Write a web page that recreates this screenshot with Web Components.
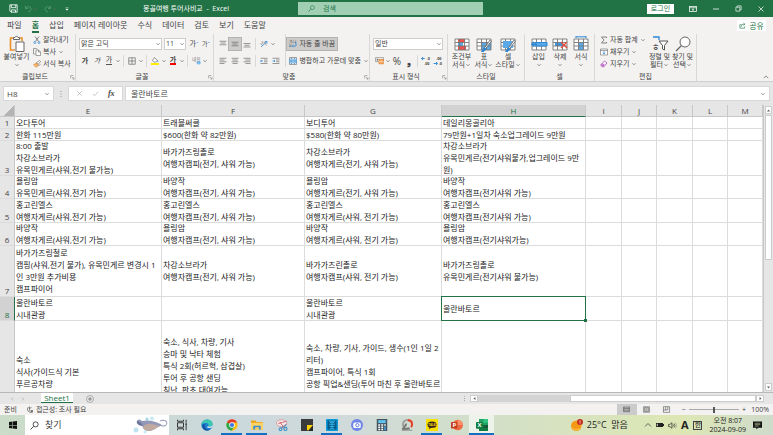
<!DOCTYPE html>
<html lang="ko">
<head>
<meta charset="utf-8">
<title>몽골여행 투어사비교 - Excel</title>
<style>
:root {
    --green: #217346;
    --ribbon: #f3f2f1;
    --frame: #e6e6e6;
    --line: #d8d8d8;
    --ink: #444;
    --font: "Open Sans", "Noto Sans CJK KR", sans-serif;
}
body {
    margin: 0;
    font-family: var(--font);
    font-size: 7px;
    line-height: 10px;
    color: var(--ink);
}
</style>
</head>
<body>
<excel-app></excel-app>

<script>
const base = `
* { box-sizing: border-box; }
button, input, select { font: inherit; color: inherit; margin: 0; padding: 0; border: 0; background: none; outline: 0; border-radius: 0; min-width: 0; }
button { display: flex; align-items: center; justify-content: center; white-space: nowrap; }
a { color: inherit; text-decoration: none; }
`;

function define(name, html, setup) {
    const template = document.createElement('template');
    template.innerHTML = html.replace('<style>', '<style>' + base);
    customElements.define(name, class extends HTMLElement {
        constructor() {
            super();
            this.attachShadow({ mode: 'open' });
            this.shadowRoot.appendChild(template.content.cloneNode(true));
        }
        connectedCallback() {
            if (setup) setup(this, this.shadowRoot);
        }
    });
}

// table body shared by the style and cell icons
const gridIcon = (fill) => `<rect x="1" y="3" width="14" height="11" fill="#fff"/>${fill}<path d="M1 3h14v11H1zM1 6.500h14M1 10h14M5.500 3v11M10.500 3v11" stroke="#777" stroke-width=".9"/>`;
const alignIcon = (w) => w.map((n, i) => `<path d="M${n[0]} ${2.5 + i * 3.5}H${n[1]}" stroke="#666" stroke-width="1.300"/>`).join('');

const icons = {
    caret: '<path d="M4 6l4 4 4-4" stroke="#666" stroke-width="2"/>',
    up: '<path d="M2 11l6-6 6 6" stroke="#444" stroke-width="1.600"/>',
    save: '<path d="M1.500 1.500h13v13H3.500l-2-2zM4 1.500v5h8v-5M4.500 14.500v-4h7v4" stroke="#fff" stroke-width="1.500"/>',
    undo: '<path d="M3 2v5h5M3 7c3-5 11-5 11 1 0 3-3 5-6 6" stroke="#5b9a78" stroke-width="1.600"/>',
    redo: '<path d="M13 2v5H8M13 7C10 2 2 2 2 8c0 3 3 5 6 6" stroke="#5b9a78" stroke-width="1.600"/>',
    custom: '<path d="M4 5h8" stroke="#fff" stroke-width="1.500"/><path d="M4 8h8l-4 4z" fill="#fff"/>',
    search: '<circle cx="10" cy="6" r="4.500" stroke="currentColor" stroke-width="1.400"/><path d="M6.500 9.500L1 15" stroke="currentColor" stroke-width="1.500"/>',
    display: '<rect x="1" y="3" width="14" height="10" stroke="#fff" stroke-width="1.500"/><path d="M1 5.500h14M8 12V8M6 9.500l2-2 2 2" stroke="#fff" stroke-width="1.500"/>',
    min: '<path d="M2 8h12" stroke="#fff" stroke-width="1.500"/>',
    restore: '<path d="M2 5h9v9H2zM5 5V2h9v9h-3" stroke="#fff" stroke-width="1.500"/>',
    close: '<path d="M3 3l10 10M13 3L3 13" stroke="#fff" stroke-width="1.400"/>',
    share: '<path d="M6 6H2v8h11v-4M5 11c0-5 3-6 8-6M10 2l3.500 3L10 8" stroke="#217346" stroke-width="1.400"/>',
    paste: '<path d="M5 2H1.500v12H6M10 2h3v3" stroke="#e8912d" stroke-width="1.600"/><path d="M4.500 3.500v-2h1.500c0-1.500 3-1.500 3 0h1.500v2z" fill="#fff" stroke="#666"/><path d="M7 6h8v9.500H7z" fill="#fff" stroke="#666"/>',
    cut: '<path d="M4 1l7 10M12 1L5 11" stroke="#555" stroke-width="1.400"/><circle cx="3.500" cy="13" r="2" stroke="#2b88d8" stroke-width="1.500"/><circle cx="12" cy="13" r="2" stroke="#2b88d8" stroke-width="1.500"/>',
    copy: '<path d="M5 12H1V1h6l2 2" stroke="#666" stroke-width="1.200"/><path d="M6 4h5l4 4v7H6zM11 4v4h4" fill="#fff" stroke="#666" stroke-width="1.200"/>',
    brush: '<path d="M1 9l6-3 4 5-5 4z" fill="#f7b46c" stroke="#e07c1c"/><path d="M7 5l5 6 2-2-2-2 3-4-2-2-4 3z" fill="#fff" stroke="#555" stroke-width="1.200"/>',
    launcher: '<path d="M2 11V2h9M6 6l7 7M13 8v5H8" stroke="#666" stroke-width="1.500"/>',
    borders: '<path d="M1.500 1.500h13v13h-13zM8 1.500v13M1.500 8h13" stroke="#555" stroke-width="1.200"/>',
    fill: '<path d="M7 1l6 6-5 4-5-4z" fill="#fff" stroke="#555" stroke-width="1.200"/><path d="M13 6c2 2 2 4 1 4s-2-1-1-4" fill="#2b88d8"/><path d="M0 12h16v4H0z" fill="#ffeb00"/>',
    phonetic: '<text x="0" y="8" font-size="8" fill="#777">내천</text><path d="M10 10h4v4h-4zM8 12h7" stroke="#5aa9e6" stroke-width="1.500"/>',
    top: '<path d="M1 2.500h14M3 6h10M1 9.500h14" stroke="#666" stroke-width="1.300"/>',
    middle: '<path d="M1 4.500h14M3 8h10M1 11.500h14" stroke="#666" stroke-width="1.300"/>',
    bottom: '<path d="M1 7h14M3 10.500h10M1 14h14" stroke="#666" stroke-width="1.300"/>',
    left: alignIcon([[1, 15], [1, 11], [1, 15], [1, 11]]),
    center: alignIcon([[1, 15], [3, 13], [1, 15], [3, 13]]),
    right: alignIcon([[1, 15], [5, 15], [1, 15], [5, 15]]),
    orient: '<path d="M2 14L14 3M10 3h4v4" stroke="#2b88d8" stroke-width="1.600"/><path d="M1 6l4 5M3 4c3-1 4 2 2 4M8 3l5 8" stroke="#666" stroke-width="1.200"/>',
    outdent: '<path d="M1 2.500h14M8 6h7M8 9.500h7M1 13h14" stroke="#666" stroke-width="1.300"/><path d="M6 8H1M3 6L1 8l2 2" stroke="#2b88d8" stroke-width="1.500"/>',
    indent: '<path d="M1 2.500h14M8 6h7M8 9.500h7M1 13h14" stroke="#666" stroke-width="1.300"/><path d="M1 8h5M4 6l2 2-2 2" stroke="#2b88d8" stroke-width="1.500"/>',
    wrap: '<text x="0" y="7" font-size="8" fill="#555">가나</text><path d="M1 12h4M12 5h2v7H7M9 9.500L6.500 12 9 14.500" stroke="#2b88d8" stroke-width="1.500"/><path d="M0 10h5M0 13h5" stroke="#666"/>',
    merge: '<path d="M1 1h14v14H1z" fill="#fff" stroke="#555"/><path d="M1 4h14v8H1z" fill="#b9dcf5" stroke="#2b88d8"/><path d="M5 1v3M11 1v3M5 12v3M11 12v3" stroke="#555"/><path d="M3 8h10M5 6L3 8l2 2M11 6l2 2-2 2" stroke="#1f78c8" stroke-width="1.200"/>',
    money: '<path d="M1 3h14v7H1z" fill="#fff" stroke="#666"/><path d="M3 5h3v3H3z" fill="#666"/><path d="M7 6h8v8H7z" fill="#f4a25a" stroke="#e07c1c"/><path d="M7 10h8" stroke="#fff"/>',
    decInc: '<path d="M6 4H1M3 1.500L1 4l2 2.500" stroke="#2b88d8" stroke-width="1.500"/><text x="9" y="6" font-size="6" font-weight="bold" fill="#444">.0</text><text x="5" y="15" font-size="6" font-weight="bold" fill="#444">.00</text>',
    decDec: '<path d="M1 12h6M5 9.500L7 12l-2 2.500" stroke="#2b88d8" stroke-width="1.500"/><text x="5" y="6" font-size="6" font-weight="bold" fill="#444">.00</text><text x="9" y="15" font-size="6" font-weight="bold" fill="#444">.0</text>',
    cond: gridIcon('<path d="M4 3h7v3.500H4zM4 10h8v4H4z" fill="#f05050"/><path d="M4 6.500h5V10H4z" fill="#5aa9e6"/>'),
    table: gridIcon('<path d="M5.500 6.500H15V14H5.500z" fill="#5aa9e6"/>') + '<path d="M15.500 5L10 12l-2 3-2 .5 1-2.500 3-3 4-6z" fill="#fff" stroke="#666" stroke-width=".8"/><path d="M8.500 11l2 2-3 3H5z" fill="#2b88d8"/>',
    cell: gridIcon('') + '<path d="M3 5h10v7H3z" fill="#5aa9e6"/><path d="M15.500 5L10 12l-2 3-2 .5 1-2.500 3-3 4-6z" fill="#fff" stroke="#666" stroke-width=".8"/><path d="M8.500 11l2 2-3 3H5z" fill="#2b88d8"/>',
    insert: gridIcon('') + '<path d="M4 6.500h12V10H4z" fill="#5aa9e6" stroke="#2b88d8"/><path d="M6 8.200H1M3 6L.8 8.200 3 10.500" stroke="#2b88d8" stroke-width="1.400"/>',
    remove: gridIcon('<path d="M3 6.500h7V10H3z" fill="#3a94dc"/>') + '<path d="M9 6l6 6M15 6l-6 6" stroke="#e84a3f" stroke-width="1.400"/>',
    format: gridIcon('<path d="M5.500 6.500h5V14h-5z" fill="#5aa9e6"/>') + '<path d="M3 .8h10M3 0v2M13 0v2" stroke="#2b88d8"/>',
    sum: '<path d="M13 4V2H3l5 6-5 6h10v-2" stroke="#555" stroke-width="1.400"/>',
    down: '<path d="M1 2h14v12H1zM1 5h14" fill="#fff" stroke="#666" stroke-width="1.200"/><path d="M8 6v6M5.500 9.500L8 12l2.500-2.500" stroke="#2b88d8" stroke-width="1.500"/>',
    erase: '<path d="M2 9l7-7 5 4-7 8H5l-3-3z" fill="#fff" stroke="#a53fb5" stroke-width="1.500"/><path d="M2 9l3-3 5 4-3 4H5l-3-3z" fill="#c77ad2"/>',
    sort: '<path d="M1 1h6v3" stroke="#2b88d8" stroke-width="1.300"/><text x="0" y="14" font-size="8" font-weight="bold" fill="#555">ㅎ</text><path d="M7 5h9l-3.500 4.500V14l-2-1V9.500z" fill="#fff" stroke="#555"/>',
    find: '<circle cx="10" cy="6" r="5" fill="#fff" stroke="#666"/><path d="M6.500 9.500L1 15" stroke="#666" stroke-width="1.200"/>',
    cancel: '<path d="M3 3l10 10M13 3L3 13" stroke="#aaa" stroke-width="1.500"/>',
    check: '<path d="M2 9l4 4 8-9" stroke="#aaa" stroke-width="1.500"/>',
    dots: '<path d="M7 2h2v2H7zM7 7h2v2H7zM7 12h2v2H7z" fill="#999"/>',
    prev: '<path d="M10 5L7 8l3 3" stroke="#aaa" stroke-width="1.500"/>',
    next: '<path d="M6 5l3 3-3 3" stroke="#aaa" stroke-width="1.500"/>',
    triUp: '<path d="M3 11l5-6 5 6z" fill="#666"/>',
    triDown: '<path d="M3 5l5 6 5-6z" fill="#666"/>',
    triLeft: '<path d="M11 3L5 8l6 5z" fill="#555"/>',
    triRight: '<path d="M5 3l6 5-6 5z" fill="#555"/>',
    add: '<circle cx="8" cy="8" r="7" stroke="#777"/><path d="M8 4v8M4 8h8" stroke="#666" stroke-width="1.400"/>',
    access: '<path d="M5 2a6 6 0 1 0 8 9M7 1v7l6 6M7 5l4-2" stroke="#555" stroke-width="1.400"/><path d="M10 8l4 4M14 8l-4 4" stroke="#555" stroke-width="1.400"/>',
    vNormal: '<path d="M1 2.500h14M1 6h14M1 9.500h14M1 13h14M1.500 2v11M14.500 2v11" stroke="#555" stroke-width="1.500"/>',
    vPage: '<path d="M1 1.500h14v13H1z" fill="#aaa" stroke="#666"/><path d="M4 4h8v8H4z" fill="#ddd" stroke="#666"/><path d="M6 6h4M6 8h4M6 10h4" stroke="#777"/>',
    vBreak: '<path d="M1 1.500h14v13H1zM1 9h10V2M6 2v7" stroke="#555" stroke-width="1.400"/>',
    win: '<path d="M0 2l7-1v7H0zM8 1l8-1v8H8zM0 9h7v6l-7-1zM8 9h8v7l-8-1z" fill="#111"/>',
    taskview: '<path d="M2 5h8v6H2zM2 1v2h8V1M2 15v-2h8v2M13.500 1v4M13.500 9v6" stroke="#333" stroke-width="1.300"/><path d="M12.500 5.500h2v3h-2z" fill="#333"/>',
    edge: '<circle cx="8" cy="8" r="7.500" fill="#1d7fd1"/><path d="M.6 7C2 1 7 0 10 .8c4 1 6 4 5.400 7-.5 2.500-4 3.200-6 2 1.500-2 .3-4.600-2.400-4.600C4 5.200 1.500 6 .6 7z" fill="#3cc7b0"/><path d="M5 7c-1 4 2 8 7 7-3 3-9 1-10-3-.5-3 1-5 3-4z" fill="#12509e"/><path d="M9.400 9.800c2 1.200 5.500.5 6-2v3c-2 1.500-6 2-8 0 1 0 1.600-.4 2-1z" fill="#dce9ec"/>',
    chrome: '<circle cx="8" cy="8" r="7.500" fill="#fbc116"/><path d="M8 8L1.300 4.500A7.500 7.500 0 0 1 14.700 4.500H8z" fill="#e33b2e"/><path d="M1.300 4.500A7.500 7.500 0 0 0 7.500 15.500L11 10 8 8z" fill="#2da94f"/><circle cx="8" cy="8" r="3.700" fill="#fff"/><circle cx="8" cy="8" r="2.800" fill="#3b78e7"/>',
    folder: '<path d="M0 2h6l1.500 2H16v10H0z" fill="#e8a317"/><path d="M0 5h16v9H0z" fill="#fcd364"/><path d="M3 14V9h10v5h-2.500v-3h-5v3z" fill="#3a8ed0"/>',
    snip: '<ellipse cx="7.500" cy="5.500" rx="7" ry="4.500" fill="#f7e9ea" stroke="#d58d94"/><path d="M3 6l11-3M5 4l7 9" stroke="#c8454b"/><path d="M14 7l-8 6" stroke="#78a" stroke-width="1.400"/><circle cx="12.500" cy="13" r="2.200" stroke="#3f8fc7" stroke-width="1.400"/><circle cx="6" cy="13.500" r="1.900" stroke="#3f8fc7" stroke-width="1.400"/>',
    note: '<path d="M0 0h16v16H0z" fill="#3b3b3b"/><path d="M8 8h8l-6 7H8z" fill="#ffd400"/><path d="M16 9v7h-6z" fill="#2a2a2a"/>',
    blue: '<rect width="16" height="16" rx="1" fill="#0a9ad8"/><path d="M2 2h12v12H2z" fill="#075a8a"/><path d="M4 3h8M5 5l3-1 3 1M4 7h8M8 4v4M5 10h6M8 8v5M5 13h6" stroke="#39c7f5"/>',
    camera: '<circle cx="8" cy="8" r="8" fill="#6f86e8"/><rect x="3" y="4.500" width="10" height="7.500" rx="2" fill="#fff"/><circle cx="8.500" cy="8.200" r="2.200" stroke="#5a70d8" stroke-width="1.200"/>',
    calc: '<path d="M1 0h14v16H1z" fill="#46545c"/><path d="M3 1.500h10v4H3z" fill="#5ec3f2"/><path d="M3 7h2.500v2H3zM7 7h2.500v2H7zM3 10h2.500v2H3zM7 10h2.500v2H7zM3 13h2.500v2H3zM7 13h2.500v2H7zM11 7h2v2h-2z" fill="#fff"/><path d="M11 10h2v5h-2z" fill="#42a5e8"/>',
    ring: '<path d="M3 10C1 3 7 0 11 2" stroke="#999" stroke-width="2.200"/><path d="M9 1.500c6 0 7 6 4.500 9.500" stroke="#e5422b" stroke-width="2.800"/><path d="M1 13l6-8 1 3-3 4 6-1 1 3-10 1z" fill="#777"/><path d="M1 15h14" stroke="#999" stroke-width="1.500"/>',
    kakao: '<rect width="16" height="16" rx="1" fill="#fae100"/><ellipse cx="8" cy="7.500" rx="6" ry="4.300" fill="#3a2023"/><path d="M5 10l-1 3.500L8 11z" fill="#3a2023"/><text x="3" y="9" font-size="4" font-weight="bold" fill="#fae100">TALK</text>',
    ppt: '<circle cx="9" cy="8" r="7" fill="#ed6c47"/><path d="M9 1a7 7 0 0 1 7 7H9z" fill="#ff8f6b"/><rect y="4" width="8.500" height="8.500" rx="1" fill="#c43e1c"/><text x="2" y="11" font-size="8" font-weight="bold" fill="#fff">P</text>',
    excel: '<path d="M4 0h12v16H4z" fill="#21a366"/><path d="M10 0h6v5h-6z" fill="#33c481"/><path d="M4 8h12v8H4z" fill="#107c41"/><path d="M10 8h6v4h-6z" fill="#185c37"/><rect y="4" width="9" height="9" rx="1" fill="#107c41"/><text x="2" y="11" font-size="8" font-weight="bold" fill="#fff">X</text>',
    weather: '<circle cx="7" cy="9" r="7" fill="#f59a16"/><path d="M1 12a7 7 0 0 0 12 0c-3 1-9 2-12 0z" fill="#ffb93a"/><circle cx="12" cy="4" r="4" fill="#c42b1c"/><path d="M12 2v3M12 6v1" stroke="#fff"/>',
    battery: '<path d="M0 4h14v8H0z" fill="#222"/><path d="M14 6h2v4h-2z" fill="#222"/><path d="M1.500 5.500h2v5h-2z" fill="#dfe5c4"/>',
    sound: '<path d="M1 6h2.500L7 3v10L3.500 10H1z" stroke="#222" stroke-width="1.200"/><path d="M9 6q1.500 2 0 4M11 4.500q2.500 3.500 0 7" stroke="#222"/><path d="M13.500 3q3 5 0 10" stroke="#888"/>',
    notice: '<path d="M0 1h16v11H9l-3 3v-3H0z" fill="#111"/><path d="M3 4h10M3 6.500h10M3 9h7" stroke="#dfe8b4"/>'
};

define('app-icon', `
<style>
:host { display: inline-flex; flex: none; width: 8px; height: 8px; }
svg { display: block; width: 100%; height: 100%; overflow: visible; }
</style>
<svg viewBox="0 0 16 16" fill="none" aria-hidden="true"></svg>
`, (el, root) => {
    root.querySelector('svg').innerHTML = icons[el.getAttribute('name')];
    const size = el.getAttribute('size');
    if (size) el.style.width = el.style.height = size + 'px';
});

define('title-bar', `
<style>
:host { display: grid; grid-template-columns: 298fr 185fr 290fr; align-items: center; height: 17px; background: var(--green); color: #fff; }
.start, .end, .quick { display: flex; align-items: center; }
.quick { gap: 6px; padding-left: 9px; }
.title { flex: 1; padding-left: 4px; text-align: center; }
.search { display: flex; align-items: center; gap: 8px; height: 13px; padding: 0 10px; background: #a0cfb4; color: var(--green); }
.search input { flex: 1; }
.search input::placeholder { color: var(--green); opacity: 1; }
.end { justify-content: flex-end; gap: 15px; padding-right: 8px; }
.login { height: 10px; width: 27px; background: #fff; color: var(--green); }
</style>
<div class="start">
    <div class="quick">
        <button aria-label="저장"><app-icon name="save" size="9"></app-icon></button>
        <button aria-label="실행 취소"><app-icon name="undo"></app-icon><app-icon name="caret" size="6"></app-icon></button>
        <button aria-label="다시 실행"><app-icon name="redo"></app-icon><app-icon name="caret" size="6"></app-icon></button>
        <button aria-label="사용자 지정"><app-icon name="custom" size="6"></app-icon></button>
    </div>
    <div class="title">몽골여행 투어사비교 &nbsp;-&nbsp; Excel</div>
</div>
<label class="search"><app-icon name="search" size="7"></app-icon><input placeholder="검색" aria-label="검색"></label>
<div class="end">
    <button class="login">로그인</button>
    <button aria-label="리본"><app-icon name="display"></app-icon></button>
    <button aria-label="최소화"><app-icon name="min"></app-icon></button>
    <button aria-label="복원"><app-icon name="restore" size="7"></app-icon></button>
    <button aria-label="닫기"><app-icon name="close"></app-icon></button>
</div>
`);

define('menu-tabs', `
<style>
:host { display: flex; align-items: center; height: 17px; padding: 0 7px; background: var(--ribbon); font-size: 8px; }
nav { display: flex; flex: 1; gap: 10px; }
a { line-height: 13px; border-bottom: 2px solid transparent; white-space: nowrap; }
.on { border-color: var(--green); font-weight: 700; color: var(--green); }
.share { height: 11px; width: 29px; gap: 3px; background: #fff; color: var(--green); }
</style>
<nav>
    <a href="#">파일</a><a href="#" class="on">홈</a><a href="#">삽입</a><a href="#">페이지 레이아웃</a><a href="#">수식</a><a href="#">데이터</a><a href="#">검토</a><a href="#">보기</a><a href="#">도움말</a>
</nav>
<button class="share"><app-icon name="share" size="7"></app-icon>공유</button>
`);

define('ribbon-group', `
<style>
:host { display: flex; flex-direction: column; flex: none; height: 47px; border-right: 1px solid var(--line); }
.body { display: flex; flex: 1; align-items: flex-start; }
.foot { display: flex; align-items: center; height: 8px; }
.foot span { flex: 1; text-align: center; line-height: 8px; }
</style>
<div class="body"><slot></slot></div>
<div class="foot"><span></span></div>
`, (el, root) => {
    root.querySelector('span').textContent = el.getAttribute('label');
    el.style.width = el.getAttribute('width') + 'px';
    if (el.hasAttribute('launcher')) {
        root.querySelector('.foot').insertAdjacentHTML('beforeend', '<app-icon name="launcher" size="5"></app-icon>');
    }
});

// tall button: icon over one or two lines of text
define('big-button', `
<style>
:host { display: block; flex: none; }
button { flex-direction: column; width: 100%; line-height: 8px; }
.icon { display: flex; margin-bottom: 1px; }
.second { display: flex; align-items: center; height: 8px; }
</style>
<button>
    <span class="icon"></span>
    <span><slot></slot></span>
    <span class="second"><slot name="second"></slot><app-icon name="caret" size="6"></app-icon></span>
</button>
`, (el, root) => {
    root.querySelector('.icon').innerHTML = `<app-icon name="${el.getAttribute('icon')}" size="16"></app-icon>`;
    el.style.width = el.getAttribute('width') + 'px';
});

define('ribbon-bar', `
<style>
:host { display: flex; align-items: flex-start; height: 48px; background: var(--ribbon); border-bottom: 1px solid #cfcfcf; }
big-button { padding-top: 2px; }
.stack { display: flex; flex-direction: column; align-items: flex-start; }
.stack button { height: 12px; gap: 2px; }
.edit { padding-left: 5px; width: 53px; }
.rows { display: flex; flex-direction: column; padding: 3px 3px 0; flex: 1; }
.row { display: flex; align-items: center; height: 13px; }
.row + .row { margin-top: 4px; }
.row button { height: 12px; min-width: 12px; }
.on { background: #cdcbc9; outline: 1px solid #b5b3b1; }
.sep { width: 1px; height: 12px; background: var(--line); margin: 0 2px; }
.tall { border-left: 1px solid var(--line); padding: 3px 0 0 1px; }
.tall button { gap: 2px; padding: 0 2px; }
.field { display: flex; align-items: center; height: 12px; background: #fff; border: 1px solid #d0cecc; padding-left: 1px; }
.field select { flex: 1; appearance: none; line-height: 10px; height: 10px; }
.name { width: 83px; margin-right: 2px; }
.size { width: 22px; margin-right: 2px; }
.number { width: 70px; }
.small { font-size: 6px; }
.under { border-bottom: 1px solid #555; line-height: 8px; }
.color { border-bottom: 2px solid #f00; line-height: 7px; }
.sign { font-size: 10px; }
sup { color: #2b88d8; font-size: 6px; line-height: 0; }
.collapse { margin: 40px 4px 0 auto; }
</style>
<ribbon-group label="클립보드" width="76" launcher>
    <big-button icon="paste" width="33">붙여넣기</big-button>
    <div class="stack">
        <button><app-icon name="cut"></app-icon>잘라내기</button>
        <button><app-icon name="copy"></app-icon>복사 <app-icon name="caret" size="6"></app-icon></button>
        <button><app-icon name="brush"></app-icon>서식 복사</button>
    </div>
</ribbon-group>
<ribbon-group label="글꼴" width="138" launcher>
    <div class="rows">
        <div class="row">
            <span class="field name"><select aria-label="글꼴"><option>맑은 고딕</option></select><app-icon name="caret" size="6"></app-icon></span>
            <span class="field size"><select aria-label="크기"><option>11</option></select><app-icon name="caret" size="6"></app-icon></span>
            <button>가<sup>ˆ</sup></button><button class="small">가<sup>ˇ</sup></button>
        </div>
        <div class="row">
            <button><b>가</b></button><button><i>가</i></button><button><span class="under">가</span></button><app-icon name="caret" size="6"></app-icon>
            <span class="sep"></span>
            <button><app-icon name="borders"></app-icon></button><app-icon name="caret" size="6"></app-icon>
            <span class="sep"></span>
            <button><app-icon name="fill"></app-icon></button><app-icon name="caret" size="6"></app-icon>
            <button><b class="color">가</b></button><app-icon name="caret" size="6"></app-icon>
            <span class="sep"></span>
            <button><app-icon name="phonetic" size="9"></app-icon></button><app-icon name="caret" size="6"></app-icon>
        </div>
    </div>
</ribbon-group>
<ribbon-group label="맞춤" width="156" launcher>
    <div class="rows">
        <div class="row">
            <button><app-icon name="top"></app-icon></button><button class="on"><app-icon name="middle"></app-icon></button><button><app-icon name="bottom"></app-icon></button>
            <span class="sep"></span>
            <button><app-icon name="orient"></app-icon></button><app-icon name="caret" size="6"></app-icon>
        </div>
        <div class="row">
            <button><app-icon name="left"></app-icon></button><button><app-icon name="center"></app-icon></button><button><app-icon name="right"></app-icon></button>
            <span class="sep"></span>
            <button><app-icon name="outdent"></app-icon></button><button><app-icon name="indent"></app-icon></button>
        </div>
    </div>
    <div class="rows tall">
        <div class="row"><button class="on"><app-icon name="wrap"></app-icon>자동 줄 바꿈</button></div>
        <div class="row"><button><app-icon name="merge"></app-icon>병합하고 가운데 맞춤</button><app-icon name="caret" size="6"></app-icon></div>
    </div>
</ribbon-group>
<ribbon-group label="표시 형식" width="78" launcher>
    <div class="rows">
        <div class="row"><span class="field number"><select aria-label="표시 형식"><option>일반</option></select><app-icon name="caret" size="6"></app-icon></span></div>
        <div class="row">
            <button><app-icon name="money" size="9"></app-icon></button><app-icon name="caret" size="6"></app-icon>
            <button class="sign">%</button><button class="sign"><b>❟</b></button>
            <span class="sep"></span>
            <button><app-icon name="decInc" size="10"></app-icon></button><button><app-icon name="decDec" size="10"></app-icon></button>
        </div>
    </div>
</ribbon-group>
<ribbon-group label="스타일" width="77">
    <big-button icon="cond" width="27">조건부<span slot="second">서식</span></big-button>
    <big-button icon="table" width="18">표<span slot="second">서식</span></big-button>
    <big-button icon="cell" width="30">셀<span slot="second">스타일</span></big-button>
</ribbon-group>
<ribbon-group label="셀" width="70">
    <big-button icon="insert" width="27">삽입</big-button>
    <big-button icon="remove" width="16">삭제</big-button>
    <big-button icon="format" width="26">서식</big-button>
</ribbon-group>
<ribbon-group label="편집" width="102">
    <div class="stack edit">
        <button><app-icon name="sum"></app-icon>자동 합계 <app-icon name="caret" size="6"></app-icon></button>
        <button><app-icon name="down"></app-icon>채우기<app-icon name="caret" size="6"></app-icon></button>
        <button><app-icon name="erase"></app-icon>지우기<app-icon name="caret" size="6"></app-icon></button>
    </div>
    <big-button icon="sort" width="23">정렬 및<span slot="second">필터</span></big-button>
    <big-button icon="find" width="23">찾기 및<span slot="second">선택</span></big-button>
</ribbon-group>
<button class="collapse" aria-label="리본 축소"><app-icon name="up" size="6"></app-icon></button>
`);

define('formula-bar', `
<style>
:host { display: flex; align-items: center; height: 23px; padding: 0 3px; background: var(--frame); font-size: 8px; }
.box { display: flex; align-items: center; height: 15px; background: #fff; border: 1px solid var(--line); padding: 0 3px; }
.name { width: 51px; }
.name input { flex: 1; }
.dots { width: 14px; display: flex; justify-content: center; }
.tools { width: 55px; justify-content: space-around; margin-right: 2px; }
.value { flex: 1; padding-left: 5px; }
.value input { flex: 1; }
i { font-family: "Liberation Serif", serif; font-weight: 700; }
</style>
<div class="box name"><input aria-label="이름 상자" value="H8"><app-icon name="caret" size="6"></app-icon></div>
<span class="dots"><app-icon name="dots"></app-icon></span>
<div class="box tools">
    <button aria-label="취소"><app-icon name="cancel" size="7"></app-icon></button>
    <button aria-label="입력"><app-icon name="check" size="7"></app-icon></button>
    <button aria-label="함수 삽입"><i>fx</i></button>
</div>
<div class="box value"><input aria-label="수식 입력줄" value="울란바토르"><app-icon name="caret" size="6"></app-icon></div>
`);

const columns = [['E', 147], ['F', 143], ['G', 137], ['H', 144], ['I', 36], ['J', 35], ['K', 36], ['L', 35], ['M', 0]];

const rows = [
    [12, '오다투어', '트래블써클', '보디투어', '데일리몽골리아'],
    [12, '한화 115만원', '$600(한화 약 82만원)', '$580(한화 약 80만원)', '79만원+1일차 숙소업그레이드 9만원'],
    [35, '8:00 출발\n차강소브라가\n유목민게르(샤워,전기 불가능)', '바가가즈링촐로\n여행자캠피(전기, 샤워 가능)', '차강소브라가\n여행자게르(전기, 샤워 가능)', '차강소브라가\n유목민게르(전기샤워불가,업그레이드 9만\n원)'],
    [23, '욜링암\n유목민게르(샤워,전기 가능)', '바양작\n여행자캠프(전기, 샤워 가능)', '욜링암\n여행자게르(전기, 샤워 가능)', '바양작\n여행자캠프(전기샤워 가능)'],
    [24, '홍고린엘스\n여행자게르(샤워,전기 가능)', '홍고린엘스\n여행자캠프(전기, 샤워 가능)', '홍고린엘스\n여행자게르(샤워, 전기 가능)', '홍고린엘스\n여행자캠프(전기샤워 가능)'],
    [23, '바양작\n여행자게르(샤워,전기 가능)', '욜링암\n여행자캠프(전기, 샤워 가능)', '바양작\n여행자게르(샤워, 전기 가능)', '욜링암\n여행자캠프(전기샤워가능)'],
    [51, '바가가즈링철로\n캠핑(샤워,전기 불가), 유목민게르 변경시 1\n인 3만원 추가비용\n캠프파이어', '차강소브라가\n여행자캠프(전기, 샤워 가능)', '바가가즈린촐로\n여행자캠프(샤워, 전기 가능)', '바가가즈링촐로\n유목민게르(전기샤워 불가능)'],
    [24, '울란바토르\n시내관광', '', '울란바토르\n시내관광', '울란바토르'],
    [126, '숙소\n식사(가이드식 기본\n푸르공차량\n\n\n', '숙소, 식사, 차량, 기사\n승마 및 낙타 체험\n특식 2회(허르헉, 삼겹살)\n투어 후 공항 샌딩\n침난, 판초 대여가능\n\n\n\n', '숙소, 차량, 기사, 가이드, 생수(1인 1일 2\n리터)\n캠프파이어, 특식 1회\n공항 픽업&샌딩(투어 마친 후 울란바토르\n\n\n\n', '']
];

define('data-sheet', `
<style>
:host { display: flex; flex: 1; min-height: 0; background: var(--frame); overflow: hidden; }
.view { flex: 1; min-width: 0; overflow: hidden; }
table { width: 100%; table-layout: fixed; border-spacing: 0; background: #fff; font-size: 8px; line-height: 12px; color: #222; }
th, td { padding: 0; border: solid #dcdcdc; border-width: 0 1px 1px 0; }
th { background: var(--frame); font-weight: 400; color: var(--ink); border-color: #c8c8c8; }
thead th { height: 12px; line-height: 11px; }
tbody th { vertical-align: bottom; border-bottom-color: #dcdcdc; line-height: 11px; }
.corner { background: linear-gradient(135deg, var(--frame) 60%, #b4b4b4 60%); }
th.on { background: #d2d2d2; color: var(--green); }
thead th.on { border-bottom-color: var(--green); }
tbody th.on { border-right-color: var(--green); }
td > div { display: flex; align-items: center; padding-left: 1px; white-space: pre; overflow: hidden; }
td.sel { position: relative; }
td.sel::before { content: ""; position: absolute; inset: -1px; border: 1px solid var(--green); }
td.sel::after { content: ""; position: absolute; right: -2px; bottom: -2px; width: 3px; height: 3px; background: var(--green); }
.scroll { width: 10px; padding: 1px; display: flex; flex-direction: column; border-left: 1px solid #c8c8c8; }
.scroll button { height: 8px; background: #fff; border: 1px solid #ccc; }
.thumb { flex: 0 1 145px; background: #fff; border: 1px solid #ccc; margin: 1px 0; }
.track { flex: 1; }
</style>
<div class="view"><table><colgroup></colgroup><thead><tr></tr></thead><tbody></tbody></table></div>
<div class="scroll">
    <button aria-label="위로"><app-icon name="triUp" size="5"></app-icon></button>
    <div class="thumb"></div>
    <div class="track"></div>
    <button aria-label="아래로"><app-icon name="triDown" size="5"></app-icon></button>
</div>
`, (el, root) => {
    root.querySelector('colgroup').innerHTML = '<col style="width: 15px">' +
        columns.map(([, w]) => `<col${w ? ` style="width: ${w}px"` : ''}>`).join('');
    root.querySelector('thead tr').innerHTML = '<th class="corner"></th>' +
        columns.map(([name]) => `<th scope="col"${name === 'H' ? ' class="on"' : ''}>${name}</th>`).join('');
    const tbody = root.querySelector('tbody');
    rows.forEach(([height, ...cells], r) => {
        const tr = tbody.insertRow();
        // the last row runs past the view, so its number is out of sight
        tr.innerHTML = `<th scope="row"${r === 7 ? ' class="on"' : ''}>${r < 8 ? r + 1 : ''}</th>`;
        columns.forEach(([name], c) => {
            const td = tr.insertCell();
            const div = document.createElement('div');
            div.style.height = height - 1 + 'px';
            div.textContent = cells[c] || '';
            td.appendChild(div);
            if (r === 7 && name === 'H') td.className = 'sel';
        });
    });
});

define('sheet-tabs', `
<style>
:host { display: flex; align-items: stretch; height: 12px; background: var(--frame); border-top: 1px solid #b8b8b8; }
.nav { display: flex; align-items: center; width: 41px; padding-left: 8px; gap: 3px; }
.tab { width: 32px; text-align: center; background: #fff; color: var(--green); font-size: 8px; line-height: 9px; border-bottom: 1px solid var(--green); margin-bottom: 1px; }
.add { width: 34px; }
.dots { margin-left: auto; align-self: center; }
.bar { display: flex; flex: 0 1 294px; margin: 2px 9px 2px 2px; background: #d4d4d4; }
.bar button { width: 8px; background: #fff; border: 1px solid #ccc; }
.thumb { flex: 0 1 186px; margin-left: auto; background: #fff; border: 1px solid #ccc; }
</style>
<div class="nav"><button aria-label="이전"><app-icon name="prev"></app-icon></button><button aria-label="다음"><app-icon name="next"></app-icon></button></div>
<a class="tab" href="#">Sheet1</a>
<button class="add" aria-label="새 시트"><app-icon name="add"></app-icon></button>
<app-icon class="dots" name="dots" size="7"></app-icon>
<div class="bar">
    <button aria-label="왼쪽"><app-icon name="triLeft" size="5"></app-icon></button>
    <div class="thumb"></div>
    <button aria-label="오른쪽"><app-icon name="triRight" size="5"></app-icon></button>
</div>
`);

define('status-bar', `
<style>
:host { display: flex; align-items: center; height: 11px; padding: 0 4px; background: var(--ribbon); white-space: nowrap; }
.access { margin: 0 auto 0 9px; gap: 2px; }
.view { width: 20px; height: 11px; }
.view.on { background: #cbcbcb; }
.zoom { margin: 0 3px; }
.first { margin-left: 5px; }
input { appearance: none; width: 50px; height: 7px; background: linear-gradient(#aaa, #aaa) center / 100% 1px no-repeat; }
input::-webkit-slider-thumb { appearance: none; width: 2px; height: 6px; background: #555; }
output { width: 20px; text-align: right; }
</style>
<span>준비</span>
<button class="access"><app-icon name="access"></app-icon>접근성: 조사 필요</button>
<button class="view on" aria-label="기본"><app-icon name="vNormal" size="7"></app-icon></button>
<button class="view" aria-label="페이지 레이아웃"><app-icon name="vPage" size="7"></app-icon></button>
<button class="view" aria-label="페이지 나누기"><app-icon name="vBreak" size="7"></app-icon></button>
<button class="zoom first">−</button>
<input type="range" aria-label="확대/축소" min="0" max="200" value="100">
<button class="zoom">+</button>
<output>100%</output>
`);

define('task-button', `
<style>
:host { display: block; width: 25px; height: 20px; }
button { width: 100%; height: 100%; border: solid transparent; border-width: 2px 0; background-clip: padding-box; }
:host([open]) button { border-bottom: 2px solid #1470c0; width: 21px; margin: 0 2px; }
:host([active]) button { background: #edf3e8; width: 100%; margin: 0; }
</style>
<button></button>
`, (el, root) => {
    const button = root.querySelector('button');
    button.setAttribute('aria-label', el.getAttribute('icon'));
    button.innerHTML = `<app-icon name="${el.getAttribute('icon')}" size="12"></app-icon>`;
});

define('task-bar', `
<style>
:host { display: flex; align-items: center; height: 20px; color: #222; background: linear-gradient(90deg, #cbdcc8, #cbd8dc 30%, #d0dadb 45%, #d2dfc8 62%, #dde7b4 88%, #cfdbcb); }
.start { width: 25px; height: 20px; }
.search { display: flex; align-items: center; width: 144px; height: 20px; padding-left: 5px; gap: 6px; background: #fff; font-size: 9px; }
.search input { flex: 1; }
.search input::placeholder { color: #444; opacity: 1; }
.ray { flex: none; width: 36px; height: 18px; }
.tray { display: flex; align-items: center; margin-left: auto; padding-right: 11px; }
.weather { font-size: 9px; gap: 4px; margin-right: 16px; }
.icons { display: flex; align-items: center; gap: 4px; }
.lang { font-size: 11px; font-weight: 700; }
.ime { width: 9px; height: 9px; border: 1px solid #444; margin: 0 7px 0 5px; font-size: 7px; }
.clock { text-align: center; line-height: 9px; margin-right: 7px; white-space: nowrap; }
</style>
<button class="start" aria-label="시작"><app-icon name="win"></app-icon></button>
<label class="search">
    <app-icon name="search" size="9"></app-icon>
    <input placeholder="찾기" aria-label="찾기">
    <svg class="ray" viewBox="0 0 36 18" fill="none" aria-hidden="true">
        <circle cx="3" cy="14" r="2.500" fill="#bfe4f0"/><circle cx="14" cy="3" r="1.500" fill="#9fd5ea"/><circle cx="19" cy="2.500" r="2" fill="#c7e9f3"/><circle cx="12" cy="16" r="1.500" fill="#c7e9f3"/>
        <path d="M27 9c6 3 8-1 6-4-2-1-4-1-6 0" stroke="#8b8fb0"/>
        <path d="M4 5c1-2 3-2 5 0 5-1 11-1 20 4-5 2-8 5-12 6-5 0-7-2-8-6-3 0-6-1-5-4z" fill="#9298b8"/>
        <path d="M10 11c2-3 5-4 9-3l8 2c-4 2-6 4-10 5-4 0-6-1-7-4z" fill="#c0a9a0"/>
        <path d="M4 5c2 0 3 1 4 2l2 3c-3 0-7-2-6-5z" fill="#6d7598"/>
    </svg>
</label>
<task-button icon="taskview"></task-button>
<task-button icon="edge"></task-button>
<task-button icon="chrome" open></task-button>
<task-button icon="folder" open></task-button>
<task-button icon="snip"></task-button>
<task-button icon="note"></task-button>
<task-button icon="blue" open></task-button>
<task-button icon="camera"></task-button>
<task-button icon="calc"></task-button>
<task-button icon="ring"></task-button>
<task-button icon="kakao" open></task-button>
<task-button icon="ppt"></task-button>
<task-button icon="excel" open active></task-button>
<div class="tray">
    <button class="weather"><app-icon name="weather" size="12"></app-icon><span>25°C &nbsp;맑음</span></button>
    <div class="icons">
        <app-icon name="up"></app-icon>
        <app-icon name="battery"></app-icon>
        <app-icon name="sound" size="9"></app-icon>
        <span class="lang">A</span>
    </div>
    <button class="ime">한</button>
    <div class="clock">오전 8:07<br>2024-09-09</div>
    <button aria-label="알림"><app-icon name="notice" size="9"></app-icon></button>
</div>
`);

define('excel-app', `
<style>
:host { display: flex; flex-direction: column; height: 100vh; overflow: hidden; }
title-bar, menu-tabs, ribbon-bar, formula-bar, sheet-tabs, status-bar, task-bar { flex: none; }
</style>
<title-bar></title-bar>
<menu-tabs></menu-tabs>
<ribbon-bar></ribbon-bar>
<formula-bar></formula-bar>
<data-sheet></data-sheet>
<sheet-tabs></sheet-tabs>
<status-bar></status-bar>
<task-bar></task-bar>
`);
</script>
</body>
</html>
